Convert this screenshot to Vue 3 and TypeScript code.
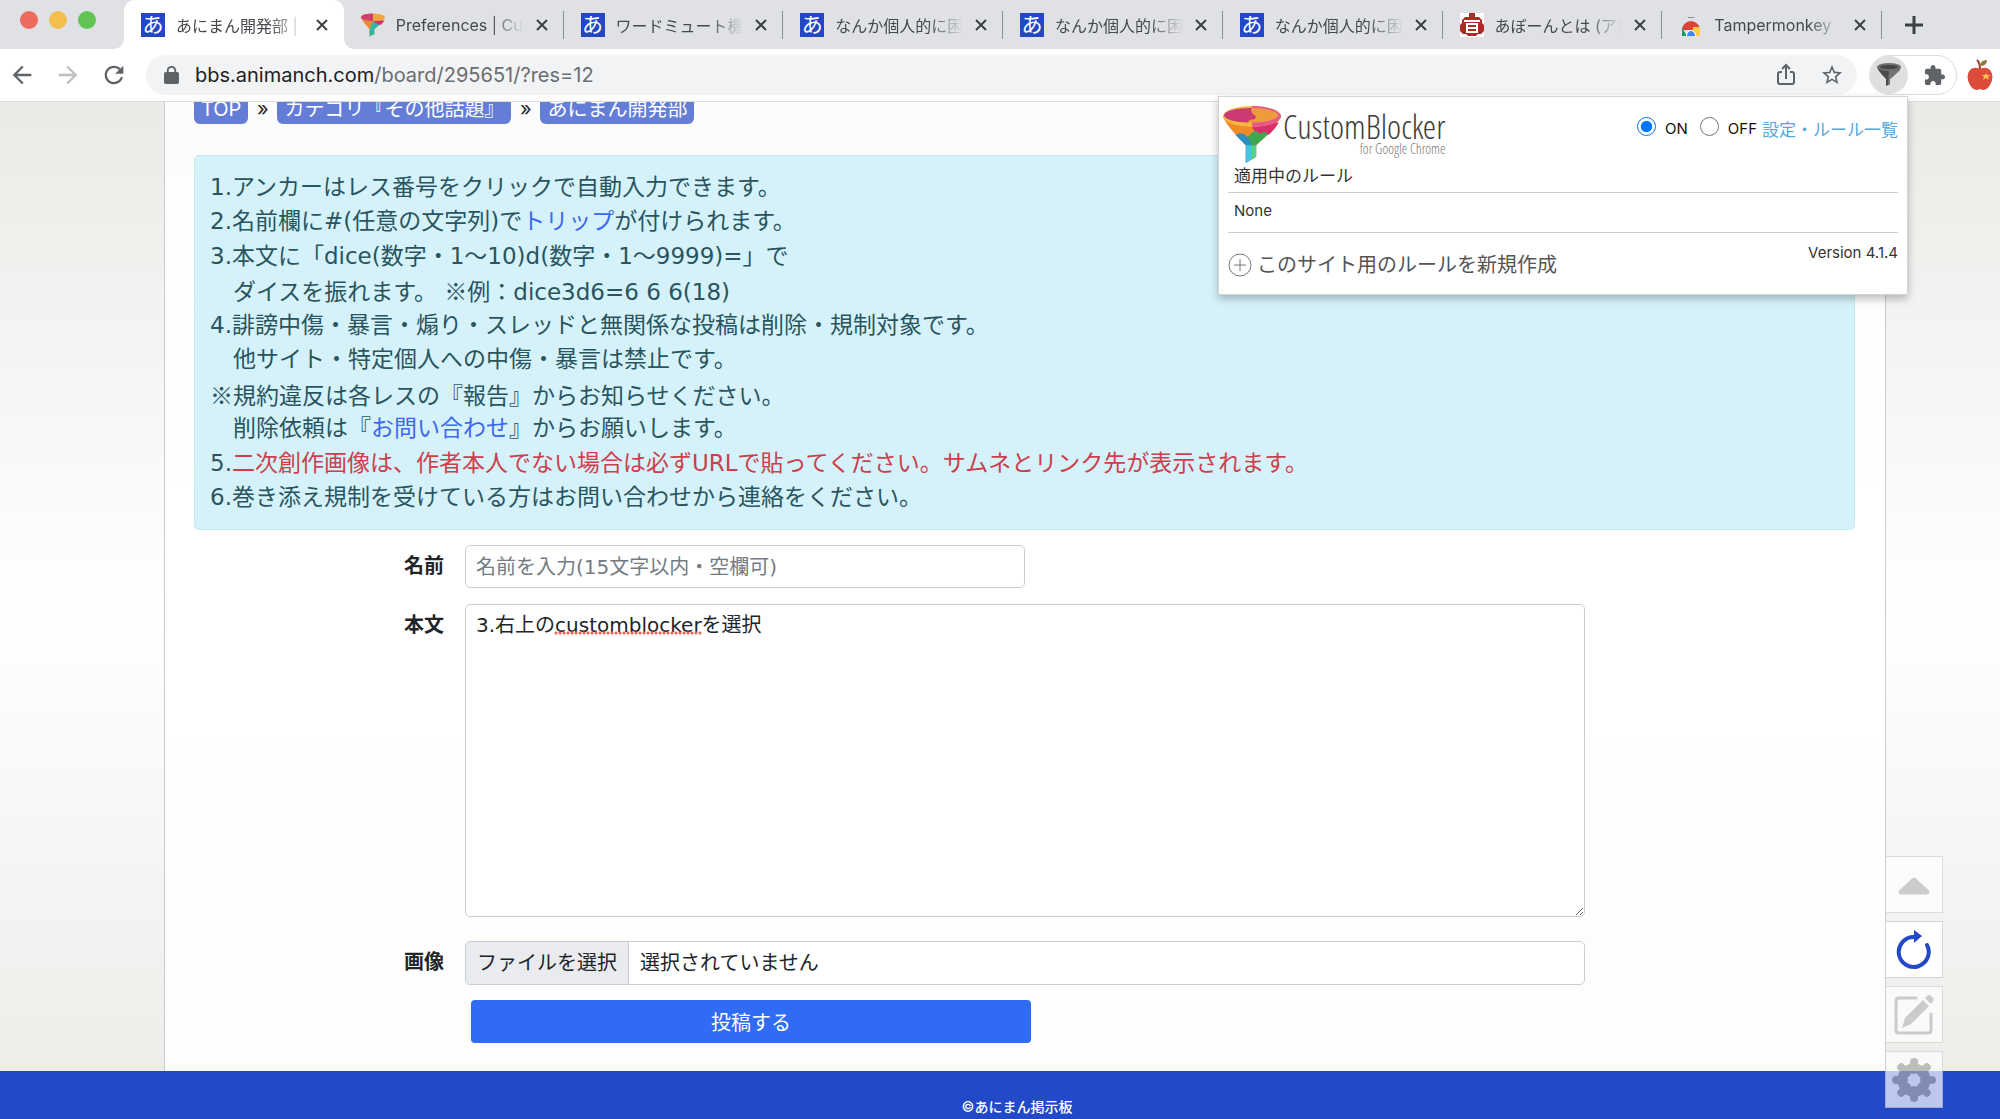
<script setup lang="ts">
import { ref } from 'vue'

type TabIcon = 'board' | 'funnel' | 'wiki' | 'store'

interface Tab {
  icon: TabIcon
  title: string
}

const tabs: Tab[] = [
  { icon: 'board', title: 'あにまん開発部 |' },
  { icon: 'funnel', title: 'Preferences | Cu' },
  { icon: 'board', title: 'ワードミュート機' },
  { icon: 'board', title: 'なんか個人的に困' },
  { icon: 'board', title: 'なんか個人的に困' },
  { icon: 'board', title: 'なんか個人的に困' },
  { icon: 'wiki', title: 'あぼーんとは (アボ' },
  { icon: 'store', title: 'Tampermonkey' },
]
const activeTab = 0

const blocking = ref('on')
const name = ref('')
const body = ref('3.右上のcustomblockerを選択')
const gearAngles = [0, 45, 90, 135]
</script>

<template>
  <div class="window">
    <header class="chrome">
      <div class="strip">
        <div class="lights"><i class="red"></i><i class="amber"></i><i class="green"></i></div>
        <div class="tabs">
          <div v-for="(tab, i) in tabs" :key="i" class="tab" :class="{ active: i === activeTab }">
            <span v-if="tab.icon === 'board'" class="fav board">あ</span>
            <svg v-else-if="tab.icon === 'funnel'" class="fav" viewBox="0 0 56 56">
              <path d="M0 10 Q2 18 20 38 V55 L31 49 V38 Q53 18 56 10Z" fill="#ef8b2c" />
              <path d="M28 18 H52 Q44 28 31 38 V49 L20 55 V38Z" fill="#35b5a5" />
              <path d="M28 18 H55 L46 28 34 24Z" fill="#d62f6c" />
              <ellipse cx="28" cy="10" rx="28" ry="9" fill="#f3a63b" />
              <path d="M28 1 A28 9 0 0 0 28 19Z" fill="#d23d72" />
            </svg>
            <svg v-else-if="tab.icon === 'wiki'" class="fav" viewBox="0 0 24 24">
              <rect width="24" height="24" fill="#fff" />
              <path d="M9 0h6v4h4l3 3v3l2 2v6l-3 3h-3l-2 2H8l-2-2H3l-3-3v-6l2-2V7l3-3h4z" fill="#ad2b25" />
              <path d="M4 7h16v2H4zM6 10h2v9H6zM16 10h2v9h-2zM7 10h10v2H7zM8 14h8v2H8zM6 18h12v2H6z" fill="#fff" />
            </svg>
            <svg v-else class="fav" viewBox="0 0 24 24">
              <path d="M9 4h6v1H9z" fill="#8d9095" />
              <path d="M3 17 A9 9 0 0 1 21 17Z" fill="#db4437" />
              <path d="M3 15 L8 23 H3Z" fill="#0f9d58" />
              <path d="M14 14 H21 V23 H14Z" fill="#ffcd40" />
              <path d="M7 23 A5 6 0 0 1 17 23Z" fill="#fff" />
              <path d="M8 23 A4 5 0 0 1 16 23Z" fill="#4285f4" />
            </svg>
            <span class="title">{{ tab.title }}</span>
            <button class="plain" aria-label="タブを閉じる">
              <svg width="16" height="16" viewBox="0 0 16 16"><path d="M3 3l10 10M13 3L3 13" stroke="#3c4043" stroke-width="2" /></svg>
            </button>
          </div>
        </div>
        <button class="plain newtab" aria-label="新しいタブ">
          <svg width="20" height="20" viewBox="0 0 20 20"><path d="M10 1v18M1 10h18" stroke="#3c4043" stroke-width="3" /></svg>
        </button>
      </div>

      <div class="toolbar">
        <button class="plain" aria-label="戻る">
          <svg width="28" height="28" viewBox="0 0 24 24"><path fill="#5f6368" d="M20 11H7.830l5.590-5.590L12 4l-8 8 8 8 1.410-1.410L7.830 13H20v-2z" /></svg>
        </button>
        <button class="plain" aria-label="進む">
          <svg width="28" height="28" viewBox="0 0 24 24"><path fill="#bdbfc2" d="M4 11h12.170l-5.590-5.590L12 4l8 8-8 8-1.410-1.410L16.170 13H4v-2z" /></svg>
        </button>
        <button class="plain" aria-label="再読み込み">
          <svg width="28" height="28" viewBox="0 0 24 24"><path fill="#5f6368" d="M17.650 6.350C16.200 4.900 14.210 4 12 4c-4.420 0-7.990 3.580-7.990 8s3.570 8 7.990 8c3.730 0 6.840-2.550 7.730-6h-2.080c-.82 2.330-3.040 4-5.650 4-3.310 0-6-2.690-6-6s2.690-6 6-6c1.660 0 3.140.69 4.220 1.780L13 11h7V4l-2.350 2.350z" /></svg>
        </button>
        <div class="omnibox">
          <svg width="15" height="18" viewBox="4 1 16 21" preserveAspectRatio="none"><path fill="#5f6368" d="M18 8h-1V6c0-2.760-2.240-5-5-5S7 3.240 7 6v2H6c-1.100 0-2 .9-2 2v10c0 1.100.9 2 2 2h12c1.100 0 2-.9 2-2V10c0-1.100-.9-2-2-2zM9 6c0-1.660 1.340-3 3-3s3 1.340 3 3v2H9V6z" /></svg>
          <span class="url"><b>bbs.animanch.com</b>/board/295651/?res=12</span>
          <button class="plain" aria-label="共有">
            <svg width="24" height="24" viewBox="0 0 24 24" fill="none" stroke="#5f6368" stroke-width="2"><path d="M8 9H6q-2 0-2 2v8q0 2 2 2h12q2 0 2-2v-8q0-2-2-2h-2M12 16V3M8 6l4-4 4 4" /></svg>
          </button>
          <button class="plain" aria-label="ブックマーク">
            <svg width="24" height="24" viewBox="0 0 24 24"><path fill="#5f6368" d="M22 9.240l-7.190-.62L12 2 9.190 8.630 2 9.240l5.460 4.730L5.820 21 12 17.270 18.180 21l-1.630-7.030L22 9.240zM12 15.400l-3.760 2.270 1-4.280-3.320-2.880 4.380-.38L12 6.100l1.710 4.040 4.380.38-3.320 2.880 1 4.280L12 15.400z" /></svg>
          </button>
        </div>
        <div class="extensions">
          <button class="plain pressed" aria-label="CustomBlocker">
            <svg width="26" height="26" viewBox="0 0 26 26">
              <path d="M1 5 Q2 9 10 17 V24 L14 22 V17 Q24 9 25 5Z" fill="#4a4a4a" />
              <path d="M13 8 H24 L14 17 V22 L12 23Z" fill="#747474" />
              <ellipse cx="13" cy="5" rx="12" ry="4" fill="#707070" />
              <ellipse cx="13" cy="5" rx="9" ry="2" fill="#454545" />
            </svg>
          </button>
          <button class="plain" aria-label="拡張機能">
            <svg width="23" height="23" viewBox="0 0 24 24"><path fill="#5f6368" d="M20.500 11H19V7c0-1.100-.9-2-2-2h-4V3.500C13 2.120 11.880 1 10.500 1S8 2.120 8 3.500V5H4c-1.100 0-1.990.9-1.990 2v3.800H3.500c1.490 0 2.700 1.210 2.700 2.700s-1.210 2.700-2.700 2.700H2V20c0 1.100.9 2 2 2h3.800v-1.500c0-1.490 1.210-2.700 2.700-2.700 1.490 0 2.700 1.210 2.700 2.700V22H17c1.100 0 2-.9 2-2v-4h1.500c1.380 0 2.500-1.120 2.500-2.500S21.880 11 20.500 11z" /></svg>
          </button>
        </div>
        <svg class="avatar" width="26" height="32" viewBox="0 0 26 32">
          <path d="M13 10 Q13 4 10 1" stroke="#a5402c" stroke-width="2" fill="none" />
          <path d="M13 7 Q13 1 20 1 Q20 7 13 7Z" fill="#8a7a45" />
          <path d="M13 10 Q19 7 23 11 Q28 17 23 26 Q19 33 13 30 Q7 33 3 26 Q-2 17 3 11 Q7 7 13 10Z" fill="#dd4b3b" />
          <path d="M19 14l1 2h3l-2 2 1 3-3-2-3 2 1-3-2-2h3z" fill="#f8c24e" />
        </svg>
      </div>
    </header>

    <main class="view">
      <div class="page">
        <nav class="crumbs">
          <a href="#">TOP</a><span>»</span><a href="#">カテゴリ『その他話題』</a><span>»</span><a href="#">あにまん開発部</a>
        </nav>

        <div class="notice">
          <p>1.アンカーはレス番号をクリックで自動入力できます。</p>
          <p>2.名前欄に#(任意の文字列)で<a href="#">トリップ</a>が付けられます。</p>
          <p>3.本文に「dice(数字・1〜10)d(数字・1〜9999)=」で</p>
          <p>　ダイスを振れます。 <span class="cjk">※</span>例：dice3d6=6 6 6(18)</p>
          <p>4.誹謗中傷・暴言・煽り・スレッドと無関係な投稿は削除・規制対象です。</p>
          <p>　他サイト・特定個人への中傷・暴言は禁止です。</p>
          <p><span class="cjk">※</span>規約違反は各レスの『報告』からお知らせください。</p>
          <p>　削除依頼は『<a href="#">お問い合わせ</a>』からお願いします。</p>
          <p>5.<em>二次創作画像は、作者本人でない場合は必ずURLで貼ってください。サムネとリンク先が表示されます。</em></p>
          <p>6.巻き添え規制を受けている方はお問い合わせから連絡をください。</p>
        </div>

        <form class="post" @submit.prevent>
          <label for="name">名前</label>
          <input id="name" v-model="name" class="field half" type="text" placeholder="名前を入力(15文字以内・空欄可)" />
          <label for="body">本文</label>
          <div class="writer">
            <textarea id="body" v-model="body" class="field" spellcheck="false"></textarea>
            <i class="squiggle"></i>
          </div>
          <label for="image">画像</label>
          <div class="field file">
            <span class="pick">ファイルを選択</span>
            <span class="chosen">選択されていません</span>
            <input id="image" type="file" />
          </div>
          <button class="submit" type="submit">投稿する</button>
        </form>
      </div>

      <footer>©あにまん掲示板</footer>

      <aside class="side">
        <button class="dim" aria-label="上へ">
          <svg width="34" height="24" viewBox="0 -3 34 24"><path d="M17 4 L30 16 H4Z" fill="#bcbcbc" stroke="#bcbcbc" stroke-width="5" stroke-linejoin="round" /></svg>
        </button>
        <button aria-label="更新">
          <svg width="36" height="40" viewBox="0 1 36 40">
            <path d="M31 16 A15 15 0 1 1 18 8" fill="none" stroke="#2249c7" stroke-width="4" stroke-linecap="round" />
            <path d="M18 1 L26 7 L18 14Z" fill="#2249c7" />
          </svg>
        </button>
        <button class="dim" aria-label="書き込む">
          <svg width="42" height="42" viewBox="0 0 42 42">
            <path d="M23 4 H6 Q3 4 3 7 V36 Q3 39 6 39 H35 Q38 39 38 36 V20" fill="none" stroke="#bcbcbc" stroke-width="3" stroke-linecap="round" />
            <path d="M30 6 L36 12 L18 30 L9 34 L12 24Z M32 4 L34 2 Q36 0 38 2 L40 4 Q41 6 40 7 L38 10Z" fill="#bcbcbc" />
          </svg>
        </button>
        <button class="dim" aria-label="設定">
          <svg width="44" height="44" viewBox="-22 -22 44 44">
            <g fill="none" stroke="#aaa">
              <path v-for="a in gearAngles" :key="a" d="M0 -18 V-10 M0 10 V18" stroke-width="8" stroke-linecap="round" :transform="`rotate(${a})`" />
              <circle r="12" stroke-width="9" />
            </g>
          </svg>
        </button>
      </aside>
    </main>

    <section class="popup">
      <div class="head">
        <svg width="58" height="58" viewBox="0 0 56 56">
          <path d="M0 10 Q2 18 22 38 V55 L32 49 V38 Q53 18 56 10Z" fill="#f08c28" />
          <path d="M12 28 Q18 24 24 30 L30 38 H32 V49 L22 55 V38Z" fill="#2b8fc0" />
          <path d="M22 38 H27 V52 L22 55Z" fill="#3fc5ee" />
          <path d="M27 38 H32 V49 L27 52Z" fill="#54d08a" />
          <path d="M24 30 Q30 22 34 25 Q42 22 44 27 L32 38 H28Z" fill="#3fa652" />
          <path d="M28 16 H54 Q50 23 44 28 Q40 23 37 26 Q34 28 33 24 Q28 26 28 16Z" fill="#d9306c" />
          <ellipse cx="28" cy="10" rx="28" ry="10" fill="#f4b83c" />
          <path d="M28 0 A28 10 0 0 1 28 20Z" fill="#e8588c" />
          <ellipse cx="28" cy="9" rx="25" ry="7" fill="#ee9b3d" />
          <path d="M28 2 A25 7 0 0 0 24 16 Q26 12 30 13 Q34 10 29 8 Q26 5 28 2Z" fill="#cb3a74" />
        </svg>
        <div class="brand"><strong>CustomBlocker</strong><small>for Google Chrome</small></div>
        <div class="switch">
          <input id="on" v-model="blocking" type="radio" value="on" /><label for="on">ON</label>
          <input id="off" v-model="blocking" type="radio" value="off" /><label for="off">OFF</label>
          <a href="#">設定・ルール一覧</a>
        </div>
      </div>
      <h2>適用中のルール</h2>
      <p class="none">None</p>
      <div class="foot">
        <a href="#" class="create">
          <svg width="24" height="24" viewBox="0 0 24 24" fill="none" stroke="#777"><circle cx="12" cy="12" r="11" /><path d="M12 6v12M6 12h12" /></svg>
          このサイト用のルールを新規作成
        </a>
        <span>Version 4.1.4</span>
      </div>
    </section>
  </div>
</template>

<style>
body {
  margin: 0;
}
</style>

<style scoped>
* {
  box-sizing: border-box;
}
.window {
  position: relative;
  display: flex;
  flex-direction: column;
  height: 100vh;
  overflow: hidden;
  font-family: Inter, "Noto Sans CJK JP", sans-serif;
  font-size: 20px;
  color: #212529;
}
a {
  text-decoration: none;
}
.plain {
  display: flex;
  align-items: center;
  justify-content: center;
  padding: 0;
  border: 0;
  background: none;
}

.strip {
  display: flex;
  height: 49px;
  background: #dfe1e5;
}
.lights {
  display: flex;
  gap: 11px;
  width: 124px;
  padding: 11px 0 0 20px;
}
.lights i {
  width: 18px;
  height: 18px;
  border-radius: 50%;
}
.red { background: #ed6a5e; }
.amber { background: #f5bf4f; }
.green { background: #61c554; }
.tabs {
  display: flex;
  flex: 1;
  min-width: 0;
}
.tab {
  position: relative;
  display: flex;
  flex: 1;
  align-items: center;
  min-width: 0;
  padding: 0 14px 0 17px;
  font-size: 16px;
  color: #45484c;
}
.tab::after {
  content: "";
  position: absolute;
  right: 0;
  top: 11px;
  width: 1px;
  height: 28px;
  background: #8b8e93;
}
.tab.active {
  border-radius: 11px 11px 0 0;
  background: #fff;
}
.tab.active::before,
.tab.active::after {
  content: "";
  position: absolute;
  top: auto;
  bottom: 0;
  width: 11px;
  height: 11px;
}
.tab.active::before {
  left: -11px;
  background: radial-gradient(circle at 0 0, transparent 11px, #fff 11px);
}
.tab.active::after {
  right: -11px;
  background: radial-gradient(circle at 100% 0, transparent 11px, #fff 11px);
}
.fav {
  flex: none;
  width: 24px;
  height: 24px;
}
.board {
  background: #2347c5;
  color: #fff;
  font-size: 21px;
  line-height: 24px;
  text-align: center;
}
.title {
  flex: 1;
  margin: 0 10px 0 11px;
  overflow: hidden;
  white-space: nowrap;
  mask-image: linear-gradient(to right, #000 calc(100% - 34px), transparent);
}
.newtab {
  width: 64px;
  margin-right: 54px;
}

.toolbar {
  display: flex;
  align-items: center;
  height: 53px;
  padding: 0 7px 0 8px;
  border-bottom: 1px solid #d9dadc;
  background: #fff;
}
.toolbar > .plain {
  width: 28px;
  margin-right: 18px;
}
.omnibox {
  display: flex;
  flex: 1;
  align-items: center;
  gap: 22px;
  height: 40px;
  padding: 0 13px 0 18px;
  border-radius: 20px;
  background: #f1f3f4;
}
.url {
  flex: 1;
  margin-left: -6px;
  font-size: 20px;
  color: #6a6d71;
}
.url b {
  font-weight: 400;
  color: #202124;
}
.extensions {
  display: flex;
  gap: 7px;
  width: 88px;
  height: 40px;
  margin: 0 10px 0 12px;
  border: 1px solid #dcdde0;
  border-radius: 20px;
}
.extensions .plain {
  width: 38px;
}
.pressed {
  border-radius: 50%;
  background: #dfdfdf;
}

.view {
  position: relative;
  display: flex;
  flex: 1;
  flex-direction: column;
  min-height: 0;
  overflow: hidden;
  background: linear-gradient(#ebeae7, #fff 50%, #ecebe8);
}
.page {
  margin: 0 114px 0 164px;
  padding: 0 30px 28px 29px;
  border: solid #c9cbcd;
  border-width: 0 1px;
  background: rgba(255, 255, 255, 0.85);
}
.crumbs {
  display: flex;
  height: 30px;
  margin-top: -8px;
  line-height: 30px;
}
.crumbs a {
  padding: 0 7px;
  border-radius: 6px;
  background: #647ed7;
  color: #fff;
}
.crumbs span {
  width: 29px;
  text-align: center;
}
.notice {
  display: flex;
  flex-direction: column;
  justify-content: space-between;
  min-height: 375px;
  margin-top: 31px;
  padding: 14px 15px 15px;
  border: 1px solid #bfe9f3;
  border-radius: 5px;
  background: #d5f2fa;
  color: #29555f;
  font-family: "DejaVu Sans", "Noto Sans CJK JP", sans-serif;
  font-size: 23px;
  line-height: 34px;
  white-space: nowrap;
}
.notice p {
  height: 34px;
  margin: 0;
}
.notice a {
  color: #3b68ee;
}
.notice em {
  font-style: normal;
  color: #cc404c;
}
.cjk {
  font-family: "Noto Sans CJK JP", sans-serif;
}

.post {
  display: grid;
  grid-template-columns: 250px 1fr;
  column-gap: 21px;
  padding: 15px 270px 0 0;
}
.post > label {
  padding-top: 6px;
  line-height: 30px;
  font-weight: 700;
  text-align: right;
}
.field {
  width: 100%;
  height: 43px;
  padding: 0 10px;
  border: 1px solid #c9ced4;
  border-radius: 5px;
  background: #fff;
  color: #212529;
  font-family: "DejaVu Sans", "Noto Sans CJK JP", sans-serif;
  font-size: 20px;
}
.half {
  width: 50%;
  margin-bottom: 16px;
}
.half::placeholder {
  color: #747b82;
  opacity: 1;
}
.writer {
  position: relative;
  margin-bottom: 24px;
}
.writer textarea {
  display: block;
  height: 313px;
  padding-top: 5px;
  line-height: 30px;
  resize: vertical;
}
.squiggle {
  position: absolute;
  left: 89px;
  top: 27px;
  width: 148px;
  height: 4px;
  background: radial-gradient(circle, #e8695f 1px, transparent 2px) 0 0 / 4px 4px;
}
.file {
  position: relative;
  display: flex;
  height: 44px;
  margin-bottom: 15px;
  padding: 0;
  line-height: 42px;
  overflow: hidden;
}
.pick {
  padding: 0 11px;
  border-right: 1px solid #c9ced4;
  background: #e9ebef;
}
.chosen {
  padding-left: 11px;
}
.file input {
  position: absolute;
  inset: 0;
  width: 100%;
  opacity: 0;
}
.submit {
  grid-column: 2;
  width: 50%;
  height: 43px;
  margin-left: 6px;
  border: 0;
  border-radius: 4px;
  background: #306bf3;
  color: #fff;
  font: inherit;
}
footer {
  flex: 1;
  padding: 24px 0 0 34px;
  background: #2249c7;
  color: #fff;
  font-size: 14px;
  line-height: 24px;
  font-weight: 500;
  text-align: center;
}

.side {
  position: absolute;
  right: 57px;
  bottom: 11px;
  display: flex;
  flex-direction: column;
  gap: 8px;
}
.side button {
  display: flex;
  align-items: center;
  justify-content: center;
  width: 58px;
  height: 57px;
  padding: 0;
  border: 1px solid #d3d3d3;
  background: #fff;
}
.side .dim {
  opacity: 0.7;
}

.popup {
  position: absolute;
  top: 96px;
  right: 92px;
  width: 690px;
  height: 199px;
  padding: 8px 9px 0;
  border: 1px solid #d3d3d3;
  background: #fff;
  box-shadow: 0 4px 8px rgba(0, 0, 0, 0.25);
  font-size: 15px;
  color: #333;
}
.head {
  display: flex;
  align-items: flex-start;
  height: 58px;
}
.head svg {
  margin: 1px 2px 0 -5px;
}
.brand {
  display: flex;
  flex-direction: column;
  padding-top: 5px;
  text-align: right;
  font-family: "Open Sans Condensed Light", "Roboto Condensed", Roboto, sans-serif;
}
.brand strong {
  font-size: 34px;
  line-height: 32px;
  font-weight: 300;
  color: #3d3d3d;
}
.brand small {
  font-size: 14px;
  line-height: 14px;
  font-weight: 300;
  color: #777;
}
.switch {
  display: flex;
  align-items: center;
  margin-left: auto;
  height: 46px;
  color: #111;
}
.switch input {
  width: 19px;
  height: 19px;
  margin: 0 9px 4px 0;
}
.switch label {
  margin-right: 12px;
}
.switch label + a {
  margin-left: -7px;
}
.switch a {
  color: #55a9dc;
  font-size: 17px;
}
.popup h2 {
  margin: 0;
  padding: 0 6px;
  height: 30px;
  border-bottom: 1px solid #ccc;
  font-size: 17px;
  line-height: 26px;
  font-weight: 400;
}
.none {
  height: 40px;
  margin: 0;
  padding: 0 6px;
  border-bottom: 1px solid #ccc;
  line-height: 36px;
}
.foot {
  display: flex;
  justify-content: space-between;
  line-height: 40px;
}
.create {
  display: flex;
  align-items: center;
  gap: 5px;
  height: 64px;
  font-size: 20px;
  color: #555;
}
</style>
